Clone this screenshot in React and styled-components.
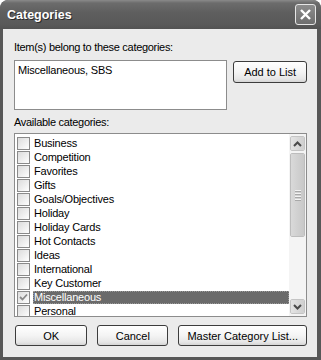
import React from 'react'
import styled, { createGlobalStyle } from 'styled-components'

const GlobalStyle = createGlobalStyle`
    html, body {
        margin: 0;
        padding: 0;
        background: #ffffff;
    }
    body {
        font-family: 'Liberation Sans', Arial, sans-serif;
        font-size: 11px;
        color: #000;
    }
`

const StyledWindow = styled.div`
    width: 321px;
    height: 360px;
    box-sizing: border-box;
    display: flex;
    flex-direction: column;
    background: #575757;
    border-radius: 8px 8px 0 0;
    padding: 0 4px 3px 3px;
    overflow: hidden;
`

const StyledTitleBar = styled.div`
    height: 29px;
    flex-shrink: 0;
    display: flex;
    align-items: center;
    justify-content: space-between;
    margin: 0 -4px 0 -3px;
    padding-left: 7px;
    padding-right: 5px;
    background: linear-gradient(#8a8a8a 0px, #6c6c6c 3px, #5f5f5f 12px, #595959 24px, #525252 29px);
    border-radius: 8px 8px 0 0;
`

const StyledTitle = styled.span`
    color: #fff;
    font-family: 'Liberation Sans', Arial, sans-serif;
    font-weight: bold;
    font-size: 12.5px;
    text-shadow: 1px 1px 0 #2a2a2a;
    padding-top: 1px;
`

const StyledClose = styled.div`
    width: 19px;
    height: 19px;
    border: 1px solid #e6e6e6;
    border-radius: 3px;
    background: linear-gradient(#8c8c8c, #6e6e6e);
    display: flex;
    align-items: center;
    justify-content: center;
`

const StyledBody = styled.div`
    flex: 1;
    background: #ebebeb;
    padding: 12px 10px 0 11px;
    display: flex;
    flex-direction: column;
`

const StyledLabel = styled.div`
    line-height: 13px;
    height: 13px;
    letter-spacing: -0.3px;
    margin-bottom: ${({ gap }) => gap}px;
`

const StyledTopRow = styled.div`
    display: flex;
    gap: 6px;
    align-items: flex-start;
    margin-bottom: 6px;
`

const StyledTextBox = styled.div`
    width: 214px;
    height: 50px;
    box-sizing: border-box;
    border: 1px solid #8c8c8c;
    background: #fff;
    padding: 3px 3px;
    line-height: 13px;
    letter-spacing: -0.2px;
`

const StyledButton = styled.div`
    width: ${({ w }) => w}px;
    height: ${({ h }) => h || 21}px;
    box-sizing: border-box;
    border: 1px solid #3c3c3c;
    border-radius: 3px;
    background: linear-gradient(#ffffff 0%, #f4f4f4 50%, #e6e6e6 85%, #d4d4d4 100%);
    display: flex;
    align-items: center;
    justify-content: center;
    margin-top: ${({ mt }) => mt || 0}px;
`

const StyledList = styled.div`
    height: 184px;
    box-sizing: border-box;
    border: 1px solid #8c8c8c;
    background: #fff;
    display: flex;
    overflow: hidden;
`

const StyledRows = styled.div`
    flex: 1;
    padding: 2px 0 0 2px;
    overflow: hidden;
`

const StyledRow = styled.div`
    height: 14px;
    display: flex;
    align-items: center;
`

const StyledCheck = styled.div`
    width: 13px;
    height: 13px;
    box-sizing: border-box;
    border: 1px solid #8a8a8a;
    background: linear-gradient(135deg, #dcdcdc 0%, #f0f0f0 60%, #ffffff 100%);
    margin-right: 3px;
    display: flex;
    align-items: center;
    justify-content: center;
    flex-shrink: 0;
`

const StyledItemText = styled.div`
    flex: 1;
    height: 13px;
    line-height: 13px;
    padding-left: 1px;
    letter-spacing: -0.2px;
    background: ${({ selected }) => (selected ? '#6a6a6a' : 'transparent')};
    color: ${({ selected }) => (selected ? '#fff' : '#000')};
    outline: ${({ selected }) => (selected ? '1px dotted #9a9a9a' : 'none')};
    outline-offset: -1px;
`

const StyledScrollbar = styled.div`
    width: 17px;
    flex-shrink: 0;
    background: #f4f4f4;
    display: flex;
    flex-direction: column;
    padding: 1px 0;
    box-sizing: border-box;
`

const StyledScrollButton = styled.div`
    height: 15px;
    margin: 1px 1px;
    box-sizing: border-box;
    border: 1px solid #ffffff;
    outline: 1px solid #c4c4c4;
    outline-offset: -1px;
    border-radius: 2px;
    background: linear-gradient(90deg, #e4e4e4, #cfcfcf);
    display: flex;
    align-items: center;
    justify-content: center;
`

const StyledThumb = styled.div`
    height: 84px;
    margin: 1px 1px;
    box-sizing: border-box;
    border: 1px solid #fff;
    outline: 1px solid #bdbdbd;
    outline-offset: -1px;
    border-radius: 2px;
    background: linear-gradient(90deg, #d9d9d9, #c8c8c8);
    display: flex;
    flex-direction: column;
    align-items: center;
    justify-content: center;
    gap: 1px;
`

const StyledGrip = styled.div`
    width: 6px;
    height: 1px;
    background: #f2f2f2;
    border-bottom: 1px solid #a8a8a8;
`

const StyledTrack = styled.div`
    flex: 1;
`

const StyledBottomRow = styled.div`
    display: flex;
    gap: 10px;
    margin-top: 8px;
    padding-left: 1px;
`

const categories = [
    'Business',
    'Competition',
    'Favorites',
    'Gifts',
    'Goals/Objectives',
    'Holiday',
    'Holiday Cards',
    'Hot Contacts',
    'Ideas',
    'International',
    'Key Customer',
    'Miscellaneous',
    'Personal',
]

const Arrow = ({ down }) => (
    <svg width="9" height="6" viewBox="0 0 9 6">
        <path
            d={down ? 'M1 1 L4.5 4.5 L8 1' : 'M1 5 L4.5 1.5 L8 5'}
            stroke="#4a4a4a"
            strokeWidth="2"
            fill="none"
        />
    </svg>
)

export default function App() {
    return (
        <>
            <GlobalStyle />
            <StyledWindow>
                <StyledTitleBar>
                    <StyledTitle>Categories</StyledTitle>
                    <StyledClose>
                        <svg width="13" height="13" viewBox="0 0 13 13">
                            <path d="M2 2 L11 11 M11 2 L2 11" stroke="#fff" strokeWidth="2.4" />
                        </svg>
                    </StyledClose>
                </StyledTitleBar>
                <StyledBody>
                    <StyledLabel gap={6}>Item(s) belong to these categories:</StyledLabel>
                    <StyledTopRow>
                        <StyledTextBox>Miscellaneous, SBS</StyledTextBox>
                        <StyledButton w={74} h={22} mt={1}>Add to List</StyledButton>
                    </StyledTopRow>
                    <StyledLabel gap={4}>Available categories:</StyledLabel>
                    <StyledList>
                        <StyledRows>
                            {categories.map((c) => {
                                const sel = c === 'Miscellaneous'
                                return (
                                    <StyledRow key={c}>
                                        <StyledCheck>
                                            {sel && (
                                                <svg width="9" height="9" viewBox="0 0 9 9">
                                                    <path d="M1 4 L3.5 6.5 L8 1.5" stroke="#8a8a8a" strokeWidth="1.8" fill="none" />
                                                </svg>
                                            )}
                                        </StyledCheck>
                                        <StyledItemText selected={sel}>{c}</StyledItemText>
                                    </StyledRow>
                                )
                            })}
                        </StyledRows>
                        <StyledScrollbar>
                            <StyledScrollButton>
                                <Arrow />
                            </StyledScrollButton>
                            <StyledThumb>
                                <StyledGrip />
                                <StyledGrip />
                                <StyledGrip />
                                <StyledGrip />
                            </StyledThumb>
                            <StyledTrack />
                            <StyledScrollButton>
                                <Arrow down />
                            </StyledScrollButton>
                        </StyledScrollbar>
                    </StyledList>
                    <StyledBottomRow>
                        <StyledButton w={73}>OK</StyledButton>
                        <StyledButton w={72}>Cancel</StyledButton>
                        <StyledButton w={130}>Master Category List...</StyledButton>
                    </StyledBottomRow>
                </StyledBody>
            </StyledWindow>
        </>
    )
}
